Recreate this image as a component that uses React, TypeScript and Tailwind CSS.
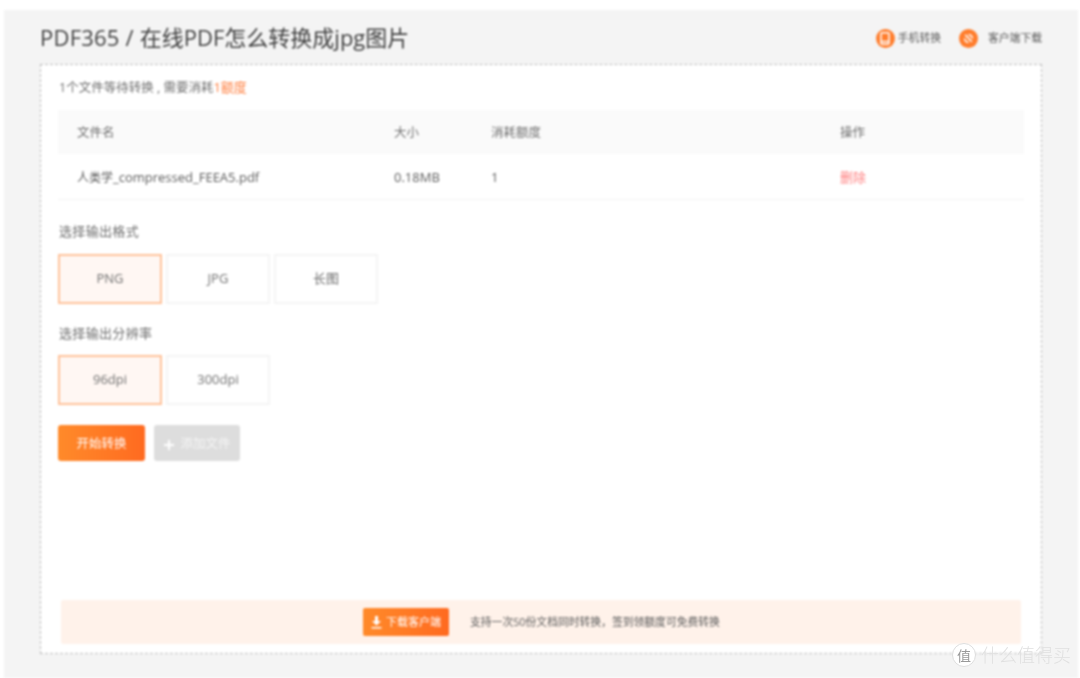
import React from "react";

const font = { fontFamily: '"Open Sans","Noto Sans CJK SC",sans-serif' };

function Option({ label, active }: { label: string; active?: boolean }) {
  return (
    <div
      className={
        active
          ? "w-[104px] h-full pb-[1px] flex items-center justify-center border-2 border-[#ffc29a] bg-[#fff7f3] text-[13px] text-[#707070]"
          : "w-[104px] h-full pb-[1px] flex items-center justify-center border-2 border-[#f4f4f4] bg-white text-[13px] text-[#707070]"
      }
    >
      {label}
    </div>
  );
}

export default function App() {
  return (
    <div className="relative w-[1080px] h-[678px] overflow-hidden bg-white" style={font}>
      <div className="w-full h-full pt-[10px] pl-[4px] pr-[2px] blur-[0.8px]">
        <div className="h-full bg-[#f4f4f4] pl-[36px] pr-[36px] flex flex-col">
          <header className="h-[54px] shrink-0 flex items-center justify-between">
            <h1 className="text-[22px] leading-[30px] font-normal text-[#404040]">
              <span className="tracking-[0.22px]">PDF365 / </span>在线PDF怎么转换成jpg图片
            </h1>
            <div className="flex items-center pt-[2px] text-[10.8px] text-[#5c5c5c]">
              <span className="w-[19px] h-[19px] rounded-full bg-[#ff7d2c] flex items-center justify-center">
                <svg width="12" height="13" viewBox="0 0 12 13" fill="none">
                  <rect x="2" y="0.75" width="8" height="11.5" rx="1" stroke="#fff" strokeWidth="1.5" />
                  <path d="M2 9.5h8" stroke="#fff" strokeWidth="1.5" />
                </svg>
              </span>
              <span className="ml-[3px]">手机转换</span>
              <span className="ml-[18px] w-[19px] h-[19px] rounded-full bg-[#ff7d2c] flex items-center justify-center">
                <svg width="13" height="13" viewBox="0 0 12 12" fill="none">
                  <path d="M3 2.5 9 9M2.5 6A3.5 3.5 0 0 0 6 9.5M6 2.5A3.5 3.5 0 0 1 9.5 6" stroke="#fff" strokeWidth="1.5" />
                </svg>
              </span>
              <span className="ml-[10px]">客户端下载</span>
            </div>
          </header>

          <main className="h-[590px] shrink-0 bg-white border border-dashed border-[#bbbbbb] pl-[17px] pr-[17px] flex flex-col">
            <p className="mt-[14px] ml-[1px] h-[16px] leading-[16px] text-[12.5px] text-[#707070]">
              1个文件等待转换 , 需要消耗<span className="text-[13px] text-[#ff7d3c]">1额度</span>
            </p>

            <div className="mt-[15px] h-[44px] bg-[#fafafa] pl-[19px] pt-[3px] grid grid-cols-[317px_97px_349px_1fr] items-center text-[12.5px] text-[#707070]">
              <span>文件名</span>
              <span>大小</span>
              <span>消耗额度</span>
              <span>操作</span>
            </div>
            <div className="h-[46px] border-b border-[#f3f3f3] pl-[19px] pt-[2px] grid grid-cols-[317px_97px_349px_1fr] items-center text-[13px] text-[#5c5c5c]">
              <span>
                <span className="text-[12px]">人类学</span>_compressed_FEEA5.pdf
              </span>
              <span>0.18MB</span>
              <span>1</span>
              <span className="text-[13px] text-[#ff8080]">删除</span>
            </div>

            <p className="mt-[22px] ml-[1px] h-[18px] leading-[18px] text-[13px] tracking-[0.33px] text-[#707070]">选择输出格式</p>
            <div className="mt-[14px] h-[50px] flex">
              <Option label="PNG" active />
              <div className="w-[4px]" />
              <Option label="JPG" />
              <div className="w-[4px]" />
              <Option label="长图" />
            </div>

            <p className="mt-[20px] ml-[1px] h-[18px] leading-[18px] text-[13px] tracking-[0.33px] text-[#707070]">选择输出分辨率</p>
            <div className="mt-[13px] h-[50px] flex">
              <Option label="96dpi" active />
              <div className="w-[4px]" />
              <Option label="300dpi" />
            </div>

            <div className="mt-[20px] h-[36px] flex gap-[9px]">
              <button className="w-[87px] h-full pt-[3px] rounded-[3px] bg-gradient-to-r from-[#ff8a2a] to-[#ff6a20] text-white text-[12.5px]">
                开始转换
              </button>
              <button className="w-[86px] h-full pt-[3px] rounded-[3px] bg-[#dddddd] text-[#f4f4f4] text-[12.5px] flex items-center justify-center gap-[5px]">
                <svg width="12" height="12" viewBox="0 0 12 12" fill="none">
                  <path d="M6 1v10M1 6h10" stroke="#ffffff" strokeWidth="2" />
                </svg>
                添加文件
              </button>
            </div>

            <div className="mt-auto mb-[9px] mx-[3px] h-[44px] rounded-[2px] bg-[#fff2ea] flex items-center pl-[302px]">
              <button className="w-[86px] h-[28px] rounded-[2px] bg-gradient-to-r from-[#ff8a2a] to-[#ff6a20] text-white text-[11px] flex items-center justify-center gap-[4px]">
                <svg width="11" height="13" viewBox="0 0 11 13" fill="#fff">
                  <path d="M4 0h3v5h3L5.5 9.5 1 5h3zM0.5 11h10v1.5H0.5z" />
                </svg>
                下载客户端
              </button>
              <span className="ml-[21px] text-[10.8px] text-[#5c5c5c]">
                支持一次50份文档同时转换，签到领额度可免费转换
              </span>
            </div>
          </main>
        </div>
      </div>

      <div className="absolute left-[952px] top-[643px] flex items-center blur-[0.3px]">
        <span className="w-[24px] h-[24px] rounded-full bg-white border border-[#dddddd] flex items-center justify-center text-[14px] text-[#999999]">
          值
        </span>
        <span className="ml-[5px] text-[18px] leading-[24px] font-light text-[#e0e0e0]">什么值得买</span>
      </div>
    </div>
  );
}
